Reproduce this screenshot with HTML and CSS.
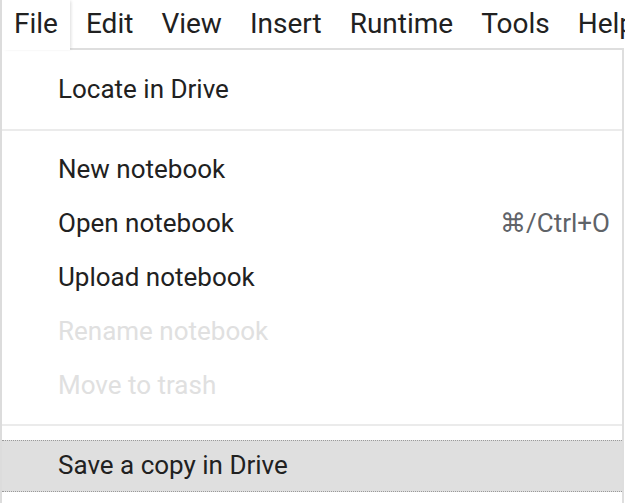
FILE: index.html
```html
<!DOCTYPE html>
<html lang="en">
<head>
<meta charset="utf-8">
<title>File menu</title>
<link rel="stylesheet" href="styles.css">
</head>
<body>
<div class="app">
  <div class="menubar">
    <div class="tab active">File</div>
    <div class="tabs-rest">
      <div class="tab">Edit</div>
      <div class="tab">View</div>
      <div class="tab">Insert</div>
      <div class="tab">Runtime</div>
      <div class="tab">Tools</div>
      <div class="tab">Help</div>
    </div>
  </div>
  <div class="menu">
    <div class="item">Locate in Drive</div>
    <div class="sep"></div>
    <div class="item">New notebook</div>
    <div class="item"><span>Open notebook</span><span class="shortcut">⌘/Ctrl+O</span></div>
    <div class="item">Upload notebook</div>
    <div class="item disabled">Rename notebook</div>
    <div class="item disabled">Move to trash</div>
    <div class="sep sep-last"></div>
    <div class="item focused">Save a copy in Drive</div>
  </div>
</div>
</body>
</html>
```

FILE: styles.css
```css
html, body {
  margin: 0;
  padding: 0;
  background: #ffffff;
  overflow: hidden;
}

body {
  font-family: Roboto, "Noto Sans", Arial, sans-serif;
  color: #212121;
}

.app {
  width: 624px;
  height: 503px;
  box-sizing: border-box;
  border-left: 2px solid #dcdcdc;
  display: flex;
  flex-direction: column;
}

.menubar {
  display: flex;
  height: 50px;
  flex: none;
}

.tab {
  font-size: 28px;
  line-height: 48px;
  padding: 0 14px;
  white-space: nowrap;
}

.tab.active {
  padding: 0 12px;
  line-height: 48px;
  height: 50px;
  box-shadow: 2px 0 3px -1px rgba(0, 0, 0, 0.14);
  position: relative;
  z-index: 1;
}

.tabs-rest {
  flex: 1;
  display: flex;
  height: 48px;
  padding-left: 2px;
  border-bottom: 2px solid #dedede;
  min-width: 0;
}

.menu {
  flex: 1;
  border-right: 2px solid #dedede;
  padding-top: 12px;
  display: flex;
  flex-direction: column;
}

.item {
  height: 54px;
  padding: 0 12px 0 56px;
  font-size: 26px;
  display: flex;
  align-items: center;
  justify-content: space-between;
  white-space: nowrap;
  flex: none;
}

.item.disabled {
  color: #e0e0e0;
}

.shortcut {
  font-size: 26px;
  color: #5f6368;
}

.sep {
  height: 2px;
  background: #ebebeb;
  margin: 13px 0 11px;
  flex: none;
}

.sep.sep-last {
  margin: 12px 0 14px;
}

.item.focused {
  height: 52px;
  box-sizing: border-box;
  background: #dfdfdf;
  border-top: 1px dotted #9a9a9a;
  border-bottom: 1px dotted #9a9a9a;
  padding-bottom: 2px;
}
```
